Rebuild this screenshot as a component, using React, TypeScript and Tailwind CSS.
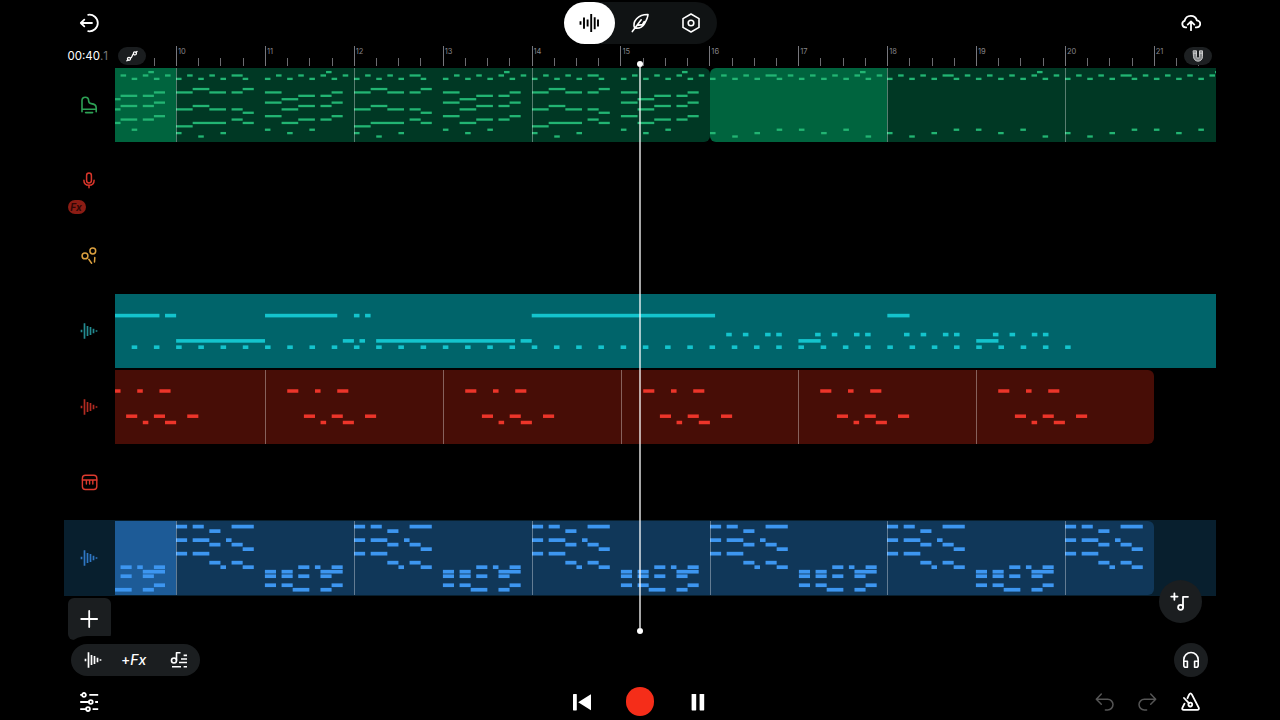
import type { ReactNode } from 'react';

// [start, length, row], start and length in sixteenths
type Note = [number, number, number];

const STEP = 5.5563;
const BAR = STEP * 16;

const shift = (notes: Note[], by: number): Note[] => notes.map(([s, l, r]) => [s + by, l, r]);

const pianoMelody: Note[] = [
  [0, 1, 2], [2, 1, 1], [4, 1, 2], [6, 1, 1], [8, 1, 2], [10, 2, 1], [12, 1, 2],
  [16, 1, 2], [18, 1, 1], [20, 1, 2], [22, 1, 1], [24, 1, 2], [26, 1, 1], [27, 1, 0], [28, 1, 2], [30, 1, 1],
];

const pianoFull: Note[] = [
  ...pianoMelody,
  [3, 3, 5], [12, 2, 5], [0, 3, 6], [6, 3, 6], [10, 2, 6],
  [3, 3, 10], [0, 3, 11], [6, 3, 11], [10, 2, 11], [12, 2, 12],
  [10, 2, 14], [3, 6, 15], [12, 2, 15], [0, 3, 16],
  [0, 1, 18], [4, 1, 19], [8, 1, 18],
  [16, 3, 6], [28, 2, 6], [22, 3, 7], [26, 2, 7], [19, 3, 8],
  [16, 3, 9], [28, 2, 9], [22, 3, 10], [26, 2, 10], [19, 3, 11],
  [16, 3, 13], [28, 2, 13], [22, 3, 14], [26, 2, 14], [19, 3, 15],
  [16, 1, 17], [20, 1, 18], [24, 1, 17],
];

const pianoSparse: Note[] = [
  ...pianoMelody, [14, 1, 1],
  [0, 1, 18], [4, 1, 19], [8, 1, 18], [12, 1, 17], [16, 1, 17], [20, 1, 18], [24, 1, 17], [28, 1, 19],
];

const tealNotes: Note[] = [
  [-11, 8, 0], [-2, 2, 0], [16, 13, 0], [32, 1, 0], [34, 1, 0], [64, 33, 0], [128, 4, 0],
  [0, 16, 4], [30, 2, 4], [33, 1, 4], [36, 25, 4], [62, 2, 4], [112, 4, 4], [144, 4, 4],
  ...[99, 102, 106, 108, 115, 118, 122, 124, 131, 134, 138, 140, 147, 150, 154, 156].map((s): Note => [s, 1, 3]),
  ...Array.from({ length: 43 }, (_, i): Note => [i * 4 - 8, 1, 5]),
];

const redNotes: Note[] = [
  [4, 2, 0], [9, 1, 0], [13, 2, 0], [7, 2, 4], [12, 2, 4], [18, 2, 4], [10, 1, 5], [14, 2, 5],
];

const blueNotes: Note[] = [
  [0, 2, 0], [3, 2, 0], [10, 4, 0], [6, 2, 1],
  [0, 2, 3], [3, 3, 3], [9, 1, 3], [6, 2, 4], [10, 2, 4], [12, 2, 5],
  [0, 2, 6], [3, 3, 6], [6, 2, 8], [10, 2, 8], [8, 1, 9], [12, 2, 9],
  [22, 2, 9], [25, 1, 9], [28, 2, 9], [16, 2, 10], [19, 2, 10], [26, 4, 10],
  [16, 2, 11], [19, 2, 11], [22, 2, 11], [26, 2, 11],
  [16, 2, 13], [19, 2, 13], [28, 2, 13], [21, 3, 14], [26, 2, 14],
];

type Lane = { top: number; pitch: number; size: number; color: string };

const green: Lane = { top: 4.1, pitch: 3.39, size: 2.3, color: '#22b573' };
const teal: Lane = { top: 21.6, pitch: 6.32, size: 3.6, color: '#14c4cd' };
const red: Lane = { top: 21, pitch: 6.3, size: 3.5, color: '#ec352a' };
const blue: Lane = { top: 5.6, pitch: 4.51, size: 3.7, color: '#3d96f0' };

type ClipProps = {
  lane: Lane;
  steps: number;
  notes: Note[];
  className: string;
  divider?: boolean;
};

function Clip({ lane, steps, notes, className, divider }: ClipProps) {
  return (
    <div className={`relative h-full shrink-0 overflow-hidden ${className}`} style={{ width: steps * STEP }}>
      <svg className="block h-full w-full" fill={lane.color}>
        {notes.map(([s, l, r], i) => (
          <rect key={i} x={s * STEP} y={lane.top + r * lane.pitch - lane.size / 2} width={l * STEP} height={lane.size} />
        ))}
      </svg>
      {divider && <div className="absolute inset-y-0 left-0 w-px bg-white/35" />}
    </div>
  );
}

type TrackProps = { icon: ReactNode; badge?: string; children?: ReactNode; selected?: boolean };

function Track({ icon, badge, children, selected }: TrackProps) {
  return (
    <div className={`relative flex h-[75.5px] shrink-0 items-center ${selected ? 'bg-[#081f2e]' : ''}`}>
      <div className="flex w-[51px] shrink-0 items-center justify-center pr-px">{icon}</div>
      <div className="flex h-[73.6px] flex-1 overflow-hidden">{children}</div>
      {badge && (
        <span className="absolute bottom-[4px] left-[3.5px] h-[14px] w-[18px] rounded-full bg-[#8b1c14] pr-px text-center text-[10px] font-bold italic leading-[14px] text-[#300704]">
          {badge}
        </span>
      )}
    </div>
  );
}

function Icon({ w, h, children, className = '', stroke = 1.6 }: { w: number; h: number; children: ReactNode; className?: string; stroke?: number }) {
  return (
    <svg
      width={w}
      height={h}
      viewBox={`0 0 ${w} ${h}`}
      fill="none"
      stroke="currentColor"
      strokeWidth={stroke}
      strokeLinecap="round"
      strokeLinejoin="round"
      className={`shrink-0 ${className}`}
    >
      {children}
    </svg>
  );
}

const WaveIcon = ({ className }: { className?: string }) => (
  <Icon w={18} h={18} className={className} stroke={1.7}>
    <path strokeLinecap="butt" d="M1.5 7.8v2.4M4.5 1.3v15.4M7.5 4v10M10.5 5.1v7.8M13.5 6.8v4.4M16.5 8.2v1.6" />
  </Icon>
);

function TopBar() {
  return (
    <header className="grid h-[46px] shrink-0 grid-cols-[1fr_153px_1fr] items-center">
      <button className="ml-[15px] flex w-5">
        <Icon w={20} h={20} stroke={1.8}>
          <path d="M9.2 1.8a8.3 8.3 0 1 1 0 16.4M13 10H1.8M5.3 6.7 1.8 10l3.5 3.3" />
        </Icon>
      </button>
      <div className="-mt-px flex h-[42px] w-[153px] items-center rounded-full bg-[#101314]">
        <button className="flex h-[42px] w-[51px] items-center justify-center rounded-[21px] bg-white text-black">
          <Icon w={20} h={20} stroke={1.9}>
            <path strokeLinecap="butt" d="M1.5 8.2v3.6M5 4.6v11.2M8.6 6.6v7M12.2 1v18M15.7 4.2v12M19 6.6v7" />
          </Icon>
        </button>
        <button className="flex h-[42px] w-[51px] items-center justify-center">
          <Icon w={18} h={20}>
            <path d="M1.3 18.6 10.2 6.8M3.7 15.2C.8 8.3 7.3 1.3 17 1.5c-.1 3.1-1.9 6.3-3.6 9.3-2 3.5-5.6 4.7-9.4 4.2M6 12.4l5.4-.8 1.8-3" />
          </Icon>
        </button>
        <button className="flex h-[42px] w-[51px] items-center justify-center">
          <Icon w={20} h={20}>
            <path d="m10 1 8 4.6v8.8L10 19l-8-4.6V5.6z" />
            <circle cx="10" cy="10" r="2.8" />
          </Icon>
        </button>
      </div>
      <button className="mr-[15px] flex w-5 justify-self-end">
        <Icon w={20} h={18} stroke={1.8}>
          <path d="M5.2 13.4H4.4A3.4 3.4 0 0 1 3.6 6.8a6.4 6.4 0 0 1 12.3-.4 3.5 3.5 0 0 1-.3 7h-.8M10 16.2V8.2M6.7 10.6 10 7.4l3.3 3.2" />
        </Icon>
      </button>
    </header>
  );
}

function Ruler() {
  const bars = Array.from({ length: 12 }, (_, i) => i + 10);
  return (
    <div className="relative flex h-[21px] shrink-0">
      <div className="flex w-[54px] shrink-0 items-center pl-[3.5px] text-[11.5px] leading-none">
        00:40<span className="tracking-[0.08em] text-[#777]">.1</span>
      </div>
      <div className="mt-px flex h-[18px] w-7 shrink-0 items-center justify-center rounded-full bg-[#1a1d1f]">
        <Icon w={12} h={12} stroke={1.3}>
          <circle cx="8.9" cy="3.4" r="1.5" />
          <circle cx="3" cy="8.8" r="1.5" />
          <path d="m10 2.4 1-.9M7.5 4c-1.7.8-.8 3.5-3 4.2M1.9 9.8l-1 .9" />
        </Icon>
      </div>
      <div className="flex flex-1 overflow-hidden pl-[7.5px]">
        <div className="flex w-[22.5px] shrink-0 items-end pb-px">
          <span className="h-2 w-px bg-[#6b6b70]" />
        </div>
        {bars.map((bar) => (
          <div key={bar} className="relative flex shrink-0 items-end pb-px" style={{ width: BAR }}>
            <span className="h-5 w-[22.22px] shrink-0 border-l border-[#77777c] pl-[1px] pt-[2px] text-[7.5px] leading-none text-[#85858a]">
              {bar}
            </span>
            <span className="h-2 w-[22.22px] border-l border-[#6b6b70]" />
            <span className="h-2 w-[22.22px] border-l border-[#6b6b70]" />
            <span className="h-2 w-[22.22px] border-l border-[#6b6b70]" />
          </div>
        ))}
      </div>
      <div className="absolute right-1 top-px flex h-[18px] w-7 items-center justify-center rounded-full bg-[#1d2022] text-[#d6d6d6]">
        <Icon w={12} h={12} stroke={0.9}>
          <path fill="#85888a" d="M1.5.8h3v5.9a1.5 1.5 0 0 0 3 0V.8h3v5.9a4.5 4.5 0 0 1-9 0z" />
          <path d="M1.5 3.2h3M7.5 3.2h3" />
        </Icon>
      </div>
    </div>
  );
}

function Tracks() {
  const redLoops = [16, 48, 80, 112, 144];
  const blueLoops = [0, 32, 64, 96, 128];
  return (
    <div className="flex flex-col">
      <Track
        icon={
          <Icon w={18} h={18} className="text-[#2da155]" stroke={1.6}>
            <path d="M2 15.8V4.6C2 2.6 3.4 1.2 5.3 1.2s3.3 1.4 3.3 3.3c0 1.9.7 2.9 2.6 3.1 3.6.4 5 1.6 5 4.3v3.9M2 13.2h14.2M5.6 16.6h7" />
          </Icon>
        }
      >
        <Clip lane={green} steps={11} notes={shift(pianoFull, -21)} className="bg-[#00643e]" />
        <Clip lane={green} steps={32} notes={pianoFull} className="bg-[#003824]" divider />
        <Clip lane={green} steps={32} notes={pianoFull} className="bg-[#003824]" divider />
        <Clip lane={green} steps={32} notes={pianoFull} className="rounded-r-md bg-[#003824]" divider />
        <Clip lane={green} steps={32} notes={pianoSparse} className="rounded-l-md bg-[#00643e]" />
        <Clip lane={green} steps={32} notes={pianoSparse} className="bg-[#003824]" divider />
        <Clip lane={green} steps={32} notes={pianoSparse} className="bg-[#003824]" divider />
      </Track>
      <Track
        badge="Fx"
        icon={
          <Icon w={12} h={17} className="text-[#d9362b]" stroke={1.5}>
            <rect x="3.6" y="1" width="4.8" height="10" rx="2.4" />
            <path d="M.9 8.3c0 3 2 5 5.1 5s5.1-2 5.1-5M6 13.3v2.5" />
          </Icon>
        }
      />
      <Track
        icon={
          <Icon w={16} h={18} className="text-[#dba03f]" stroke={1.5}>
            <circle cx="4" cy="8.9" r="2.9" />
            <circle cx="11.8" cy="4" r="2.9" />
            <path d="m7.8 12.3 2.8 4M13.8 10.6l-.3 4.4" />
          </Icon>
        }
      />
      <Track icon={<WaveIcon className="text-[#238b91]" />}>
        <Clip lane={teal} steps={200} notes={shift(tealNotes, 11)} className="bg-[#00646a]" />
      </Track>
      <Track icon={<WaveIcon className="text-[#b32b22]" />}>
        <Clip lane={red} steps={27} notes={shift(redNotes, -5)} className="bg-[#470d06]" />
        {redLoops.map((start) => (
          <Clip
            key={start}
            lane={red}
            steps={32}
            notes={redNotes}
            className={start === 144 ? 'rounded-r-md bg-[#470d06]' : 'bg-[#470d06]'}
            divider
          />
        ))}
      </Track>
      <Track
        icon={
          <Icon w={17} h={17} className="text-[#dd3a2e]" stroke={1.4}>
            <rect x="1.4" y="1.3" width="14.4" height="14.2" rx="3" />
            <path d="M1.4 6h14.4M5.4 6v4M8.6 6v4M11.8 6v4" />
          </Icon>
        }
      />
      <Track selected icon={<WaveIcon className="text-[#2f77c4]" />}>
        <Clip lane={blue} steps={11} notes={shift(blueNotes, -21)} className="bg-[#1d5b97]" />
        {blueLoops.map((start) => (
          <Clip key={start} lane={blue} steps={32} notes={blueNotes} className="bg-[#103759]" divider />
        ))}
        <Clip lane={blue} steps={16} notes={blueNotes.filter(([s]) => s < 16)} className="rounded-r-md bg-[#103759]" divider />
      </Track>
    </div>
  );
}

function Tools() {
  return (
    <div className="flex h-[88px] shrink-0 flex-col px-1 pt-[2px]">
      <button className="flex h-[42px] w-[42.5px] shrink-0 justify-center rounded-md bg-[#1b1e20] pt-[12.5px]">
        <Icon w={18} h={18} stroke={1.8}>
          <path d="M9.2 1v16M1.2 9h16" />
        </Icon>
      </button>
      <div className="relative mt-[3.5px] flex items-center justify-between">
        <div className="ml-[3px] flex h-8 w-[129px] items-center rounded-full bg-[#1b1e20] pl-[12.5px] ring-8 ring-black">
          <WaveIcon />
          <span className="ml-[19.5px] w-[30px] whitespace-nowrap text-[14px] font-medium leading-none">
            +<i>Fx</i>
          </span>
          <Icon w={18} h={18} className="ml-[19px]" stroke={1.6}>
            <circle cx="4" cy="9.5" r="2.5" />
            <path strokeLinecap="butt" d="M6.5 9.5V1.7h4M13.6 4.4h3.4M11 8h6M9 11.5h8M2 15.8h9M13.6 15.8h3.4" />
          </Icon>
        </div>
        <button className="mr-[4.5px] flex size-[34px] items-center justify-center rounded-full bg-[#1b1e20]">
          <Icon w={18} h={18} stroke={1.6}>
            <path d="M1.8 14.2V8.7a7.2 7.2 0 0 1 14.4 0v5.5M1.8 10.2h3.6v6H3.8a2 2 0 0 1-2-2zM16.2 10.2h-3.6v6h1.6a2 2 0 0 0 2-2z" />
          </Icon>
        </button>
      </div>
    </div>
  );
}

function Transport() {
  return (
    <footer className="grid h-9 shrink-0 grid-cols-[1fr_173px_1fr] items-center px-4">
      <button className="flex w-[18px]">
        <Icon w={20} h={20} stroke={1.8}>
          <circle cx="4" cy="2.9" r="1.9" />
          <circle cx="10.8" cy="10" r="1.9" />
          <circle cx="8" cy="17.1" r="1.9" />
          <path strokeLinecap="butt" d="M.2 2.9H2M9.3 2.9h8.9M.2 10h8.6M15.2 10h2.8M.2 17.1H6M12.6 17.1h5.6" />
        </Icon>
      </button>
      <div className="grid grid-cols-3 place-items-center">
        <Icon w={20} h={18} stroke={0}>
          <rect x="1" y="1" width="3.8" height="16.4" rx=".6" fill="currentColor" />
          <path d="M6.2 9.2 18.5 1.4q.5-.3.5.4v15q0 .7-.5.3z" fill="currentColor" />
        </Icon>
        <button className="size-[28.5px] rounded-full bg-[#f52d19]" />
        <Icon w={14} h={18} stroke={0}>
          <rect x=".6" y="1" width="4.6" height="16.4" rx=".6" fill="currentColor" />
          <rect x="8.6" y="1" width="4.6" height="16.4" rx=".6" fill="currentColor" />
        </Icon>
      </div>
      <div className="flex items-center justify-end gap-6">
        <Icon w={19} h={19} className="text-[#555]" stroke={1.5}>
          <path d="M1.3 7.3h11.4a4.9 4.9 0 0 1 0 10.6h-2.3M6.3 2 1.3 7.3l5 5" />
        </Icon>
        <Icon w={19} h={19} className="text-[#555]" stroke={1.5}>
          <path d="M17.7 7.3H6.3a4.9 4.9 0 0 0 0 10.6h2.3M12.7 2l5 5.3-5 5" />
        </Icon>
        <Icon w={19} h={19} stroke={1.8}>
          <path d="M6.5 6.2 8.2 2.4q1.3-2.2 2.6 0l6.9 13.2q.8 2.2-1.5 2.3H2.8q-2.2-.2-1.3-2.3l2-3.9M3 6l4.9 5.2" />
          <circle cx="9.3" cy="12.6" r="1.9" />
        </Icon>
      </div>
    </footer>
  );
}

export default function App() {
  return (
    <main className="relative flex h-[720px] w-[1280px] flex-col overflow-hidden bg-black px-16 font-[Inter,sans-serif] text-white">
      <TopBar />
      <Ruler />
      <Tracks />
      <Tools />
      <Transport />

      {/* Playhead */}
      <div className="absolute left-[637px] top-[61px] flex h-[573px] w-1.5 flex-col items-center">
        <span className="size-1.5 rounded-full bg-white" />
        <span className="w-[2px] flex-1 bg-white/65" />
        <span className="size-1.5 rounded-full bg-white" />
      </div>

      <button className="absolute left-[1158.5px] top-[580px] flex size-[43px] items-center justify-center rounded-full bg-[#1b1e20]">
        <Icon w={20} h={20} stroke={1.8}>
          <path d="M4.4 1.4v6.4M1.2 4.6h6.4M13 15.2V4.8h5" />
          <circle cx="10.6" cy="15.3" r="2.5" />
        </Icon>
      </button>
    </main>
  );
}
